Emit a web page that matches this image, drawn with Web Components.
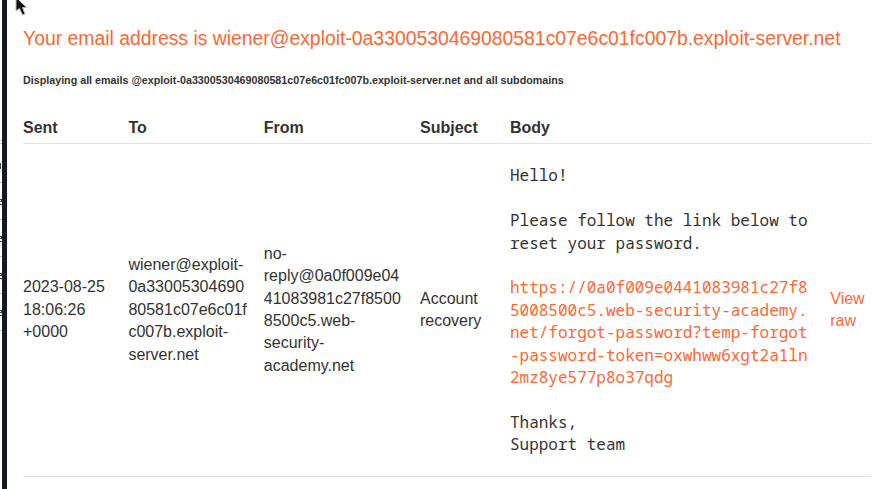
<!DOCTYPE html>
<html lang="en">
<head>
<meta charset="utf-8">
<title>Email client</title>
<style>
html,body{margin:0;height:489px;overflow:hidden;background:#fff}
body{font:16px/22.4px "Liberation Sans",Arial,sans-serif;color:#333332}
</style>
</head>
<body>
<mail-window>
  <background-window slot="behind"></background-window>
  <mail-title>Your email address is wiener@exploit-0a3300530469080581c07e6c01fc007b.exploit-server.net</mail-title>
  <mail-note>Displaying all emails @exploit-0a3300530469080581c07e6c01fc007b.exploit-server.net and all subdomains</mail-note>
  <mail-row head>
    <span>Sent</span><span>To</span><span>From</span><span>Subject</span><span>Body</span><span></span>
  </mail-row>
  <mail-row>
    <span>2023-08-25<br>18:06:26<br>+0000</span>
    <span>wiener@exploit-<br>0a33005304690<br>80581c07e6c01f<br>c007b.exploit-<br>server.net</span>
    <span>no-<br>reply@0a0f009e04<br>41083981c27f8500<br>8500c5.web-<br>security-<br>academy.net</span>
    <span>Account<br>recovery</span>
    <mail-body><span>Hello!

Please follow the link below to
reset your password.

<mail-link>https://0a0f009e0441083981c27f8
5008500c5.web-security-academy.
net/forgot-password?temp-forgot
-password-token=oxwhww6xgt2a1ln
2mz8ye577p8o37qdg</mail-link>

Thanks,
Support team</span></mail-body>
    <mail-link>View<br>raw</mail-link>
  </mail-row>
</mail-window>
<mouse-pointer></mouse-pointer>
<script>
const define = (name, html) => {
  const t = document.createElement('template');
  t.innerHTML = html;
  customElements.define(name, class extends HTMLElement {
    constructor(){ super(); this.attachShadow({mode:'open'}).append(t.content.cloneNode(true)); }
  });
};
define('mail-window', `<style>
:host{display:grid;grid-template-columns:2px 5px 1fr;height:489px}
.edge{background:#151b22}
main{padding:26px 11px 0 16px;min-width:0}
</style><slot name="behind"></slot><div class="edge"></div><main><slot></slot></main>`);
define('background-window', `<style>
:host{display:block;overflow:hidden;width:2px}
svg{display:block}
</style><svg width="2" height="489"><g fill="#c8c8c8"><path d="M0 140h2v1H0zM0 143h2v1H0zM0 182h2v1H0zM0 219h2v1H0zM0 256h2v1H0zM0 293h2v1H0zM0 330h2v1H0z"/></g>
<g fill="#444"><path d="M0 163h1v6H0z"/><path id="e" d="M0 199h1v1H0zM1 199h1v2H1zM0 201h2v1H0zM0 204h2v1H0z"/><use href="#e" y="37"/><use href="#e" y="74"/><use href="#e" y="111"/></g></svg>`);
define('mail-title', `<style>
:host{display:block;font-size:19.36px;line-height:24px;color:#ff6633;white-space:nowrap}
</style><slot></slot>`);
define('mail-note', `<style>
:host{display:block;margin-top:22px;font-size:10.72px;line-height:16px;font-weight:bold;white-space:nowrap}
</style><slot></slot>`);
define('mail-row', `<style>
:host{display:grid;grid-template-columns:105.4px 135.4px 156.2px 90px 320.3px 1fr;align-items:center;height:332px;border-bottom:1px solid #e2e2e2;white-space:nowrap}
:host([head]){height:26px;margin-top:29px;font-weight:bold;align-items:start}
</style><slot></slot>`);
define('mail-body', `<style>
:host{display:block;white-space:pre;font-family:"Noto Sans Mono","DejaVu Sans Mono",monospace}
</style><slot></slot>`);
define('mail-link', `<style>
:host{display:inline;color:#ff6633}
</style><slot></slot>`);
define('mouse-pointer', `<style>
:host{position:absolute;left:14px;top:0;width:14px;height:17px}
svg{display:block}
</style><svg width="14" height="17"><path d="M2-3V11L5.500 8.500L8.500 15L11 14L8.500 7.500H12.500Z" fill="#111" stroke="#bbb" stroke-width="1"/></svg>`);
</script>
</body>
</html>
